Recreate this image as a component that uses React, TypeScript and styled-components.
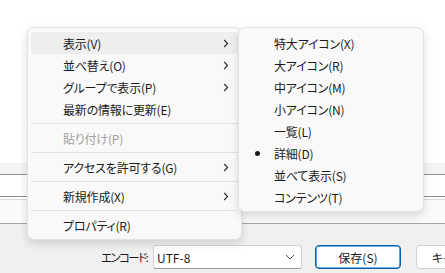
import React, { type FC } from 'react';
import styled, { createGlobalStyle } from 'styled-components';

const GlobalStyle = createGlobalStyle`
  html, body {
    margin: 0;
    padding: 0;
    background: #ffffff;
    overflow: hidden;
  }
  * {
    box-sizing: border-box;
  }
`;

const FONT = `"Noto Sans CJK JP", "Noto Sans", sans-serif`;

const Screen = styled.div`
  position: relative;
  width: 445px;
  height: 273px;
  display: flex;
  flex-direction: column;
  font-family: ${FONT};
  font-feature-settings: 'palt';
  font-size: 12px;
  color: #1b1b1b;
  overflow: hidden;
`;

const ListArea = styled.div`
  height: 163px;
  flex: none;
  background: #ffffff;
`;

const ListHeader = styled.div`
  height: 12px;
  flex: none;
  background: #f3f3f3;
  border-bottom: 1px solid #8c8c8c;
`;

const ListRow = styled.div`
  height: 22px;
  flex: none;
  background: #ffffff;
  border-bottom: 1px solid #8c8c8c;
`;

const ScrollStrip = styled.div`
  height: 25px;
  flex: none;
  background: #fafafa;
  border-top: 1px solid #dcdcdc;
  margin-top: 2px;
  border-bottom: 1px solid #a6a6a6;
`;

const Footer = styled.div`
  flex: 1;
  background: #f0f0f0;
  display: flex;
  align-items: flex-start;
  padding: 21px 0 0 101px;
  overflow: hidden;
`;

const FieldLabel = styled.span`
  flex: none;
  width: 52px;
  height: 24px;
  line-height: 24px;
  font-size: 11.5px;
  letter-spacing: -1.6px;
  white-space: nowrap;
  overflow: hidden;
`;

const Select = styled.div`
  flex: none;
  width: 149px;
  height: 24px;
  background: #ffffff;
  border: 1px solid #d4d4d4;
  border-bottom-color: #9a9a9a;
  border-radius: 3px;
  display: flex;
  align-items: center;
  justify-content: space-between;
  padding: 0 6px 0 3px;
  margin-right: 13px;
`;

const Button = styled.div<{ $primary?: boolean }>`
  flex: none;
  width: 86px;
  height: 24px;
  background: #ffffff;
  border: 1px solid ${(p) => (p.$primary ? '#005fb8' : '#d0d0d0')};
  box-shadow: ${(p) => (p.$primary ? 'inset 0 0 0 0.6px #005fb8' : 'none')};
  border-radius: 4px;
  display: flex;
  align-items: center;
  justify-content: center;
  margin-right: 15px;
  white-space: nowrap;
`;

const Menu = styled.div<{ $left: number; $width: number }>`
  position: absolute;
  top: 27px;
  left: ${(p) => p.$left}px;
  width: ${(p) => p.$width}px;
  background: #f9f9f9;
  border: 1px solid #e2e2e2;
  border-radius: 7px;
  padding: 4px 3px 3px;
  box-shadow: 0 4px 10px rgba(0, 0, 0, 0.13);
`;

const Item = styled.div<{ $active?: boolean; $disabled?: boolean }>`
  position: relative;
  height: 22px;
  display: flex;
  align-items: center;
  padding: 0 9px 0 32px;
  border-radius: 4px;
  background: ${(p) => (p.$active ? '#eeeeee' : 'transparent')};
  color: ${(p) => (p.$disabled ? '#a0a0a0' : '#1b1b1b')};
  letter-spacing: -0.2px;
  white-space: nowrap;
`;

const ItemText = styled.span`
  flex: 1;
`;

const Bullet = styled.span`
  position: absolute;
  left: 13px;
  top: 9px;
  width: 5px;
  height: 5px;
  border-radius: 50%;
  background: #1b1b1b;
`;

const Separator = styled.div`
  height: 1px;
  background: #e3e3e3;
  margin: 3px 0;
`;

const Chevron: FC = () => (
  <svg width="6" height="9" viewBox="0 0 6 9">
    <polyline points="1.2,1 4.6,4.5 1.2,8" fill="none" stroke="#2b2b2b" strokeWidth="1.1" />
  </svg>
);

const DownChevron: FC = () => (
  <svg width="10" height="6" viewBox="0 0 10 6">
    <polyline points="1,1 5,5 9,1" fill="none" stroke="#555" strokeWidth="1" />
  </svg>
);

type Entry = { label: string; sub?: boolean; disabled?: boolean; active?: boolean } | 'sep';

const mainItems: Entry[] = [
  { label: '表示(V)', sub: true, active: true },
  { label: '並べ替え(O)', sub: true },
  { label: 'グループで表示(P)', sub: true },
  { label: '最新の情報に更新(E)' },
  'sep',
  { label: '貼り付け(P)', disabled: true },
  'sep',
  { label: 'アクセスを許可する(G)', sub: true },
  'sep',
  { label: '新規作成(X)', sub: true },
  'sep',
  { label: 'プロパティ(R)' },
];

const viewItems = [
  '特大アイコン(X)',
  '大アイコン(R)',
  '中アイコン(M)',
  '小アイコン(N)',
  '一覧(L)',
  '詳細(D)',
  '並べて表示(S)',
  'コンテンツ(T)',
];

const App: FC = () => {
  return (
    <>
      <GlobalStyle />
      <Screen>
        <ListArea />
        <ListHeader />
        <ListRow />
        <ScrollStrip />
        <Footer>
          <FieldLabel>エンコード:</FieldLabel>
          <Select>
            <span>UTF-8</span>
            <DownChevron />
          </Select>
          <Button $primary>保存(S)</Button>
          <Button>キャンセル</Button>
        </Footer>

        <Menu $left={27} $width={215}>
          {mainItems.map((it, ind) =>
            it === 'sep' ? (
              <Separator key={ind} />
            ) : (
              <Item key={ind} $active={it.active} $disabled={it.disabled}>
                <ItemText>{it.label}</ItemText>
                {it.sub && <Chevron />}
              </Item>
            )
          )}
        </Menu>

        <Menu $left={238} $width={186}>
          {viewItems.map((label, ind) => (
            <Item key={ind}>
              {label === '詳細(D)' && <Bullet />}
              <ItemText>{label}</ItemText>
            </Item>
          ))}
        </Menu>
      </Screen>
    </>
  );
};

export default App;
